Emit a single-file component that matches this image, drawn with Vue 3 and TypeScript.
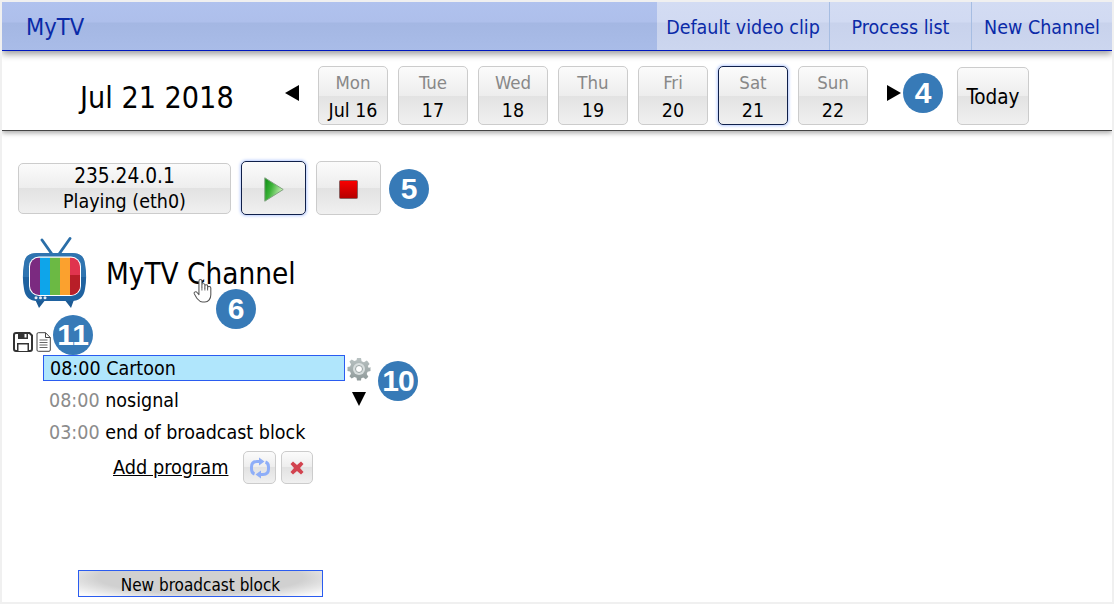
<script setup lang="ts">
interface Day { name: string; date: string; active?: boolean }
const days: Day[] = [
  { name: 'Mon', date: 'Jul 16' },
  { name: 'Tue', date: '17' },
  { name: 'Wed', date: '18' },
  { name: 'Thu', date: '19' },
  { name: 'Fri', date: '20' },
  { name: 'Sat', date: '21', active: true },
  { name: 'Sun', date: '22' },
]
const stripes = ['#7b2a80', '#0ea5ea', '#6bb944', '#fba12e', '#e0344e']
</script>

<template>
  <div class="page">
    <header class="topbar">
      <div class="brand">MyTV</div>
      <nav class="tabs">
        <a class="tab t1">Default video clip</a>
        <a class="tab t2">Process list</a>
        <a class="tab t3">New Channel</a>
      </nav>
    </header>

    <section class="datebar">
      <div class="curdate">Jul 21 2018</div>
      <span class="tri-left"></span>
      <div class="days">
        <button v-for="d in days" :key="d.name" class="day btn" :class="{ active: d.active }">
          <span class="dname">{{ d.name }}</span>
          <span class="ddate">{{ d.date }}</span>
        </button>
      </div>
      <span class="tri-right"></span>
      <button class="today btn">Today</button>
      <span class="badge b4">4</span>
    </section>

    <main class="content">
      <div class="controls">
        <button class="addr btn"><span class="ip">235.24.0.1</span><span>Playing (eth0)</span></button>
        <button class="ctl btn active">
          <svg width="20" height="25" viewBox="0 0 20 25">
            <defs>
              <linearGradient id="pg" x1="0" y1="0" x2="1" y2="0.4">
                <stop offset="0" stop-color="#0a8c10" />
                <stop offset="0.45" stop-color="#3eb43a" />
                <stop offset="1" stop-color="#c6f0b4" />
              </linearGradient>
            </defs>
            <path d="M.8 .8 L19.200 12.500 L.8 24.200 Z" fill="url(#pg)" stroke="#7fa27f" stroke-width="1" />
          </svg>
        </button>
        <button class="ctl btn stop">
          <svg width="19" height="19" viewBox="0 0 19 19">
            <defs>
              <linearGradient id="sg" x1="0" y1="0" x2="0" y2="1">
                <stop offset="0" stop-color="#fb0000" />
                <stop offset="1" stop-color="#b40000" />
              </linearGradient>
            </defs>
            <rect x=".5" y=".5" width="18" height="18" rx="1" fill="url(#sg)" stroke="#8a6060" />
          </svg>
        </button>
        <span class="badge b5">5</span>
      </div>

      <div class="channel">
        <svg class="tv" width="68" height="74" viewBox="0 0 68 74">
          <path d="M32 20 L20 3 M35 20 L48 1.500" stroke="#2a6ea8" stroke-width="2.800" stroke-linecap="round" />
          <path d="M12 60 L17 71 L24 62 Z M53 60 L49 71 L42 62 Z" fill="#1c5a94" />
          <path d="M15 16 H50 C58 16 62 19 63 27 C64.500 36 64.500 44 63 52 C62 60 57 64 50 64 H15 C8 64 3 60 2 52 C.5 44 .5 36 2 27 C3 19 7 16 15 16 Z" fill="#1f62a0" />
          <path d="M15 16 H50 C58 16 62 19 63 27 L64 40 H1 L2 27 C3 19 7 16 15 16 Z" fill="#3d84bd" opacity=".55" />
          <rect x="7" y="19.500" width="52" height="39.500" rx="10" fill="#fff" />
          <clipPath id="scr"><rect x="8" y="20.500" width="50" height="37.500" rx="9" /></clipPath>
          <g clip-path="url(#scr)">
            <rect v-for="(c, i) in stripes" :key="c" :x="8 + i * 10" y="20.500" width="10.100" height="37.500" :fill="c" />
            <rect x="48" y="38" width="10" height="20" fill="#b81e28" />
          </g>
          <circle cx="14" cy="60.800" r="1.500" fill="#e4edf5" />
          <circle cx="18.500" cy="60.800" r="1.500" fill="#e4edf5" />
          <circle cx="23" cy="60.800" r="1.500" fill="#e4edf5" />
        </svg>
        <h1 class="title">MyTV Channel</h1>
        <svg class="hand" width="19" height="25" viewBox="0 0 16 24" preserveAspectRatio="none">
          <path d="M5 13 V3 C5 1 7.500 1 7.500 3 V9 V6.500 C7.500 5 10 5 10 6.500 V10 V7.500 C10 6.200 12.300 6.200 12.300 7.500 V10.500 V9 C12.300 7.800 15 8 15 9.500 V16 C15 20 13 23 10 23 H8 C5.500 23 4.500 21 3 19 L1 15 C0.500 13.500 2.500 12.500 3.500 14 L5 16 Z" fill="#fff" stroke="#555" stroke-width="0.9" stroke-linejoin="round" />
          <path d="M7.500 9 V12 M10 10 V12 M12.300 10.500 V12" stroke="#555" stroke-width="0.8" />
        </svg>
        <span class="badge b6">6</span>
      </div>

      <div class="tools">
        <svg width="20" height="20" viewBox="0 0 20 20">
          <path d="M1 3 Q1 1 3 1 H16.500 L19 3.500 V17 Q19 19 17 19 H3 Q1 19 1 17 Z" fill="#fff" stroke="#333" stroke-width="2" />
          <rect x="5" y="1" width="10" height="6" fill="#333" />
          <rect x="11.500" y="2" width="2" height="3.500" fill="#fff" />
          <rect x="4" y="11" width="12" height="8" fill="#333" />
          <rect x="5.500" y="12.500" width="9" height="6.500" fill="#fff" />
        </svg>
        <svg width="15" height="20" viewBox="0 0 15 20">
          <path d="M1 2 Q1 .700 2.300 .700 H9.500 L14.300 5.500 V18 Q14.300 19.300 13 19.300 H2.300 Q1 19.300 1 18 Z M9.500 .700 V5.500 H14.300" fill="#fff" stroke="#444" stroke-width="1" />
          <path d="M3.500 8 H11.500 M3.500 10.500 H11.500 M3.500 13 H11.500 M3.500 15.500 H11.500" stroke="#666" stroke-width="1" />
        </svg>
        <span class="badge b11">11</span>
      </div>

      <div class="playlist">
        <div class="row selected">
          <div class="rowbox"><span>08:00</span> Cartoon</div>
          <svg class="gear" width="24" height="24" viewBox="0 0 24 24">
            <defs>
              <linearGradient id="gg" x1="0" y1="0" x2="0" y2="1">
                <stop offset="0" stop-color="#b9c2c2" />
                <stop offset="1" stop-color="#8f9a9a" />
              </linearGradient>
            </defs>
            <path fill="url(#gg)" d="M10 1 H14 L14.600 4.200 L17 5.200 L19.700 3.400 L20.600 4.300 L22.600 7 L20.800 9 L21.800 11 L23.500 10 V14 L20.600 14.700 L19.700 17 L21.300 19.700 L18.800 22.200 L16.300 20.400 L14.300 21.300 L14 23.500 H10 L9.500 20.800 L7.300 19.900 L4.700 21.600 L2.400 19.300 L4 16.800 L3.100 14.600 L.5 14 V10 L3.100 9.400 L4 7.200 L2.400 4.600 L4.700 2.400 L7.300 4 L9.500 3.200 Z" />
            <circle cx="12" cy="12" r="6" fill="#d8dede" />
            <circle cx="12" cy="12" r="3.500" fill="#fff" stroke="#9aa4a4" />
          </svg>
          <span class="badge b10">10</span>
        </div>
        <div class="row">
          <div class="rowtext"><span class="time">08:00</span> nosignal</div>
          <span class="tri-down"></span>
        </div>
        <div class="row">
          <div class="rowtext"><span class="time">03:00</span> end of broadcast block</div>
        </div>
      </div>

      <div class="actions">
        <a class="add">Add program</a>
        <button class="sm btn">
          <svg width="24" height="22" viewBox="0 0 24 22">
            <g fill="none" stroke="#8eaef8" stroke-width="3">
              <path d="M12 4.500 H9 Q3.500 4.500 3.500 10 V12 Q3.500 16 6.500 17" />
              <path d="M12 17.500 H15 Q20.500 17.500 20.500 12 V10 Q20.500 6 17.500 5" />
            </g>
            <path d="M11 0.500 L16.500 4.500 L11 8.500 Z M13 13.500 L7.500 17.500 L13 21.500 Z" fill="#8eaef8" />
          </svg>
        </button>
        <button class="sm narrow btn">
          <svg width="16" height="16" viewBox="0 0 16 16">
            <path d="M4 1.500 L8 5 L12 1.500 L14.500 4 L11 8 L14.500 12 L12 14.500 L8 11 L4 14.500 L1.500 12 L5 8 L1.500 4 Z" fill="#d2434f" />
          </svg>
        </button>
      </div>

      <button class="newblock">New broadcast block</button>
    </main>
  </div>
</template>

<style>
html, body { margin: 0; padding: 0; background: #fff; }
</style>

<style scoped>
.page {
  width: 1110px;
  height: 600px;
  border: 2px solid #f0f0f0;
  background: #fff;
  font-family: "DejaVu Sans", "Liberation Sans", sans-serif;
  font-stretch: condensed;
  color: #000;
  overflow: hidden;
  position: relative;
}
button { font: inherit; color: inherit; padding: 0; }
.topbar {
  height: 48px;
  display: flex;
  justify-content: space-between;
  border-bottom: 1px solid #0018c0;
  background: linear-gradient(#b0c2ee 0, #aebfeb 20px, #a4b7e3 21px, #a9bce8 100%);
  box-shadow: 0 3px 7px rgba(0, 0, 0, .4);
  position: relative;
  z-index: 1;
}
.brand { padding-left: 24px; line-height: 51px; font-size: 23.500px; color: #0a2aa8; }
.tabs {
  display: flex;
  background: linear-gradient(#d3dcf3 0, #d1daf2 20px, #c8d2ec 21px, #ccd6ef 100%);
}
.tab {
  font-size: 19.500px;
  color: #0a2aa8;
  line-height: 51px;
  text-align: center;
  box-sizing: border-box;
}
.t1 { width: 173px; border-right: 1px solid #a6bde2; }
.t2 { width: 142px; border-right: 1px solid #a6bde2; }
.t3 { width: 140px; }
.datebar {
  height: 80px;
  box-sizing: border-box;
  padding-top: 10px;
  display: flex;
  align-items: center;
  border-bottom: 1px solid #444;
  box-shadow: 0 2px 5px rgba(0, 0, 0, .35);
  position: relative;
}
.curdate { margin: 4px 0 0 78px; width: 205px; font-size: 30.200px; }
.tri-left, .tri-right { width: 0; height: 0; border-top: 8px solid transparent; border-bottom: 8px solid transparent; }
.tri-left { border-right: 14px solid #000; margin-right: 19px; margin-top: -5px; }
.tri-right { border-left: 14px solid #000; margin-left: 19px; margin-top: -5px; }
.days { display: flex; gap: 10px; }
.btn {
  border: 1px solid #ccc;
  border-radius: 5px;
  background: linear-gradient(#fbfbfb 0, #ededed 50%, #e2e2e2 50%, #f0f0f0 100%);
}
.btn.active {
  border-color: #10204a;
  box-shadow: 0 0 3px 1px #b8ccff;
}
.day {
  width: 70px;
  height: 59px;
  box-sizing: border-box;
  display: flex;
  flex-direction: column;
  align-items: center;
  padding-top: 4px;
}
.dname { font-size: 18.500px; color: #888; line-height: 24px; }
.ddate { font-size: 19.500px; line-height: 30px; margin-top: 1px; }
.today {
  width: 72px;
  height: 58px;
  margin-left: 56px;
  padding-top: 2px;
  font-size: 20.500px;
  flex-shrink: 0;
}
.badge {
  position: absolute;
  width: 40px;
  height: 40px;
  border-radius: 50%;
  background: #377ab7;
  color: #fff;
  font: bold 30px/40px "Liberation Sans", Arial, sans-serif;
  text-align: center;
}
.b4 { left: 901px; top: 22px; }
.content { position: relative; height: 471px; }
.controls {
  display: flex;
  align-items: center;
  gap: 10px;
  padding: 30px 0 0 16px;
}
.addr {
  width: 213px;
  height: 51px;
  display: flex;
  flex-direction: column;
  align-items: center;
  font-size: 19.500px;
  line-height: 25px;
  justify-content: center;
  padding-top: 2px;
}
.ip { font-size: 20.700px; }
.ctl {
  width: 65px;
  height: 54px;
  display: flex;
  align-items: center;
  justify-content: center;
  padding-top: 3px;
}
.stop { padding-right: 1px; }
.b5 { left: 387px; top: 38px; }
.channel {
  display: flex;
  align-items: center;
  margin: 22px 0 0 20px;
  height: 74px;
  gap: 16px;
}
.title { margin: 0; font-weight: 400; font-size: 29.400px; }
.hand { position: absolute; left: 191px; top: 147px; }
.b6 { left: 214px; top: 158px; }
.tools {
  display: flex;
  align-items: center;
  gap: 3px;
  margin: 20px 0 0 11px;
  height: 22px;
}
.b11 { left: 51px; top: 184px; }
.playlist { padding-left: 41px; margin-top: 1px; font-size: 19.500px; }
.row { display: flex; align-items: center; height: 32px; position: relative; }
.row.selected { height: 27px; margin-bottom: 3px; }
.rowbox {
  width: 302px;
  height: 26px;
  box-sizing: border-box;
  border: 1px solid #2a5cf0;
  background: #b0e6fc;
  padding-left: 6px;
  line-height: 26px;
}
.rowtext { width: 295px; padding-left: 7px; margin-left: -1px; }
.time { color: #8c8c8c; }
.gear { margin: 2px 0 0 2px; }
.tri-down {
  width: 0;
  height: 0;
  margin: -2px 0 0 8px;
  border-left: 7px solid transparent;
  border-right: 7px solid transparent;
  border-top: 14px solid #000;
}
.b10 { left: 335px; top: 7px; letter-spacing: -1px; }
.actions {
  display: flex;
  align-items: center;
  gap: 5px;
  margin: 3px 0 0 111px;
}
.add { font-size: 19.700px; text-decoration: underline; margin-right: 10px; }
.sm {
  width: 33px;
  height: 33px;
  display: flex;
  align-items: center;
  justify-content: center;
}
.sm.narrow { width: 32px; }
.newblock {
  position: absolute;
  left: 76px;
  top: 439px;
  width: 245px;
  height: 27px;
  box-sizing: border-box;
  border: 1px solid #2a5cf0;
  background: radial-gradient(ellipse 65% 100% at 50% 25%, #d0d0d0 65%, #fafafa 100%);
  font-size: 17px;
  padding-top: 2px;
}
</style>
